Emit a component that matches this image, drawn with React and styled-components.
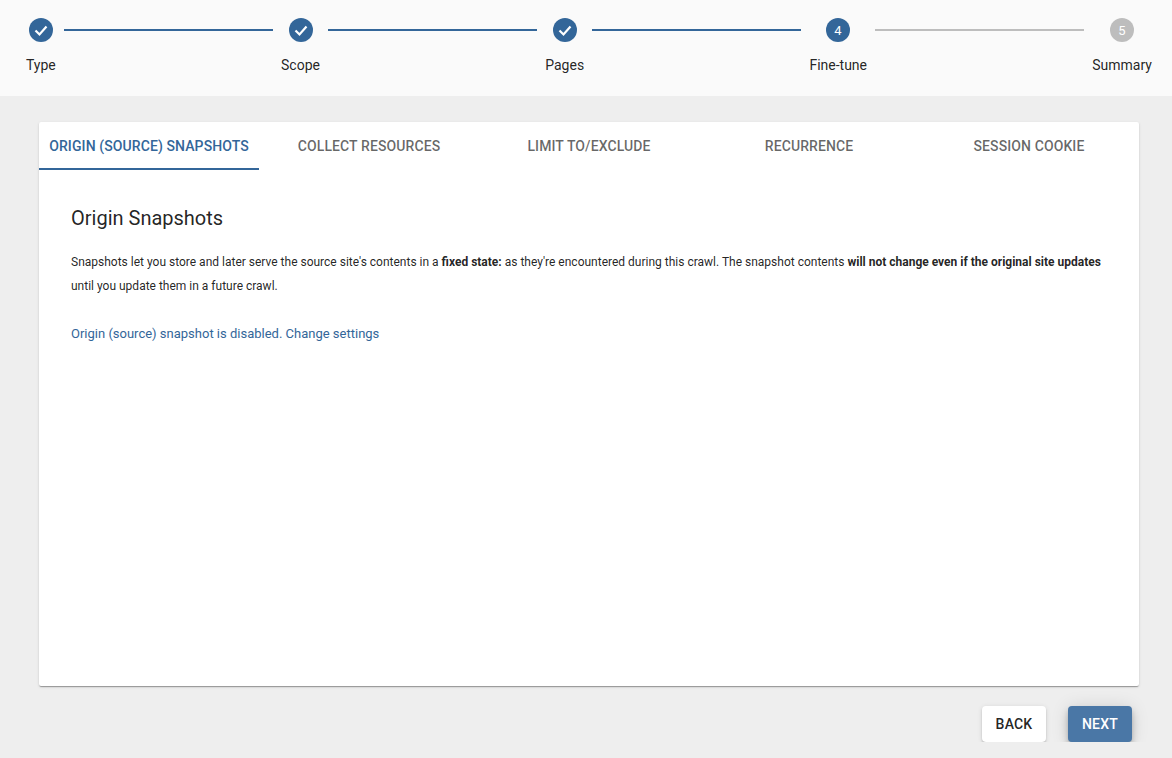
import React, { useState } from 'react';
import styled, { createGlobalStyle } from 'styled-components';

const GlobalStyle = createGlobalStyle`
  body {
    margin: 0;
    background: #eeeeee;
    font-family: Roboto, "Liberation Sans", sans-serif;
    color: rgba(0, 0, 0, 0.87);
  }
`;

const BLUE = '#336699';

const steps = [
  { label: 'Type', state: 'done' },
  { label: 'Scope', state: 'done' },
  { label: 'Pages', state: 'done' },
  { label: 'Fine-tune', state: 'active' },
  { label: 'Summary', state: 'todo' },
];

const tabs = ['Origin (source) snapshots', 'Collect resources', 'Limit to/exclude', 'Recurrence', 'Session cookie'];

// Stepper
const Header = styled.header`
  background: #fafafa;
  height: 96px;
  box-sizing: border-box;
  padding: 18px 20px 0 26px;
`;

const StepperRow = styled.div`
  display: flex;
  align-items: flex-start;
`;

const Step = styled.div`
  display: flex;
  flex-direction: column;
  align-items: center;
`;

const StepLabel = styled.span`
  margin-top: 13px;
  font-size: 14px;
  line-height: 20px;
  color: rgba(0, 0, 0, 0.87);
  white-space: nowrap;
`;

const Connector = styled.div`
  flex: 1;
  height: 2px;
  margin: 11px 8px 0;
  background: ${(p) => (p.$done ? BLUE : '#bdbdbd')};
`;

const StepIcon = ({ index, state }) => {
  const fill = state === 'todo' ? '#bdbdbd' : BLUE;
  return (
    <svg width="24" height="24" viewBox="0 0 24 24">
      <circle cx="12" cy="12" r="12" fill={fill} />
      {state === 'done' ? (
        <polyline points="6.5,12.5 10.5,16.5 17.5,8.5" fill="none" stroke="#fff" strokeWidth="2.2" />
      ) : (
        <text x="12" y="16.5" textAnchor="middle" fontSize="13" fill="#fff" fontFamily="Roboto, sans-serif">
          {index + 1}
        </text>
      )}
    </svg>
  );
};

// Card and tabs
const Main = styled.main`
  padding: 26px 0 0 39px;
`;

const Card = styled.section`
  width: 1100px;
  height: 564px;
  background: #fff;
  border-radius: 2px;
  box-shadow: 0 2px 1px -1px rgba(0, 0, 0, 0.2), 0 1px 1px 0 rgba(0, 0, 0, 0.14), 0 1px 3px 0 rgba(0, 0, 0, 0.12);
`;

const TabBar = styled.div`
  display: grid;
  grid-template-columns: repeat(5, 1fr);
`;

const Tab = styled.button`
  height: 48px;
  border: none;
  background: none;
  padding: 2px 0 0;
  white-space: nowrap;
  font-family: Roboto, "Liberation Sans", sans-serif;
  font-size: 14px;
  font-weight: 500;
  letter-spacing: 0.1px;
  text-transform: uppercase;
  color: ${(p) => (p.$active ? BLUE : 'rgba(0, 0, 0, 0.6)')};
  border-bottom: 2px solid ${(p) => (p.$active ? BLUE : 'transparent')};
  cursor: pointer;
`;

const Content = styled.div`
  padding: 32px 32px 0;
`;

const Title = styled.h2`
  margin: 0;
  font-size: 20px;
  font-weight: 400;
  line-height: 32px;
  color: rgba(0, 0, 0, 0.87);
`;

const Text = styled.p`
  margin: 16px 0 0;
  font-size: 12px;
  line-height: 24px;
  color: rgba(0, 0, 0, 0.87);

  b {
    font-weight: 700;
  }
`;

const SettingsLink = styled.a`
  display: block;
  margin-top: 25px;
  font-size: 13px;
  line-height: 22px;
  color: ${BLUE};
  text-decoration: none;
  cursor: pointer;
`;

// Footer buttons
const Actions = styled.div`
  width: 1100px;
  box-sizing: border-box;
  padding: 20px 7px 0 0;
  display: flex;
  justify-content: flex-end;
  gap: 22px;
`;

const Button = styled.button`
  width: 64px;
  height: 36px;
  padding: 0;
  border: none;
  border-radius: 4px;
  font-family: Roboto, "Liberation Sans", sans-serif;
  font-size: 14px;
  font-weight: 500;
  letter-spacing: 0.2px;
  text-transform: uppercase;
  background: ${(p) => (p.$primary ? '#4a77a6' : '#fff')};
  color: ${(p) => (p.$primary ? '#fff' : 'rgba(0, 0, 0, 0.87)')};
  box-shadow: ${(p) =>
    p.$primary
      ? '0 3px 5px -1px rgba(0,0,0,0.2), 0 6px 10px 0 rgba(0,0,0,0.14), 0 1px 18px 0 rgba(0,0,0,0.12)'
      : '0 3px 1px -2px rgba(0,0,0,0.2), 0 2px 2px 0 rgba(0,0,0,0.14), 0 1px 5px 0 rgba(0,0,0,0.12)'};
  cursor: pointer;
`;

export default function App() {
  const [tab, setTab] = useState(0);

  return (
    <>
      <GlobalStyle />
      <Header>
        <StepperRow>
          {steps.map((s, i) => (
            <React.Fragment key={s.label}>
              {i > 0 && <Connector $done={s.state !== 'todo'} />}
              <Step>
                <StepIcon index={i} state={s.state} />
                <StepLabel>{s.label}</StepLabel>
              </Step>
            </React.Fragment>
          ))}
        </StepperRow>
      </Header>
      <Main>
        <Card>
          <TabBar>
            {tabs.map((t, i) => (
              <Tab key={t} $active={i === tab} onClick={() => setTab(i)}>
                {t}
              </Tab>
            ))}
          </TabBar>
          <Content>
            <Title>Origin Snapshots</Title>
            <Text>
              Snapshots let you store and later serve the source site's contents in a <b>fixed state:</b> as they're
              encountered during this crawl. The snapshot contents <b>will not change even if the original site updates</b>{' '}
              until you update them in a future crawl.
            </Text>
            <SettingsLink>Origin (source) snapshot is disabled. Change settings</SettingsLink>
          </Content>
        </Card>
        <Actions>
          <Button>Back</Button>
          <Button $primary>Next</Button>
        </Actions>
      </Main>
    </>
  );
}
